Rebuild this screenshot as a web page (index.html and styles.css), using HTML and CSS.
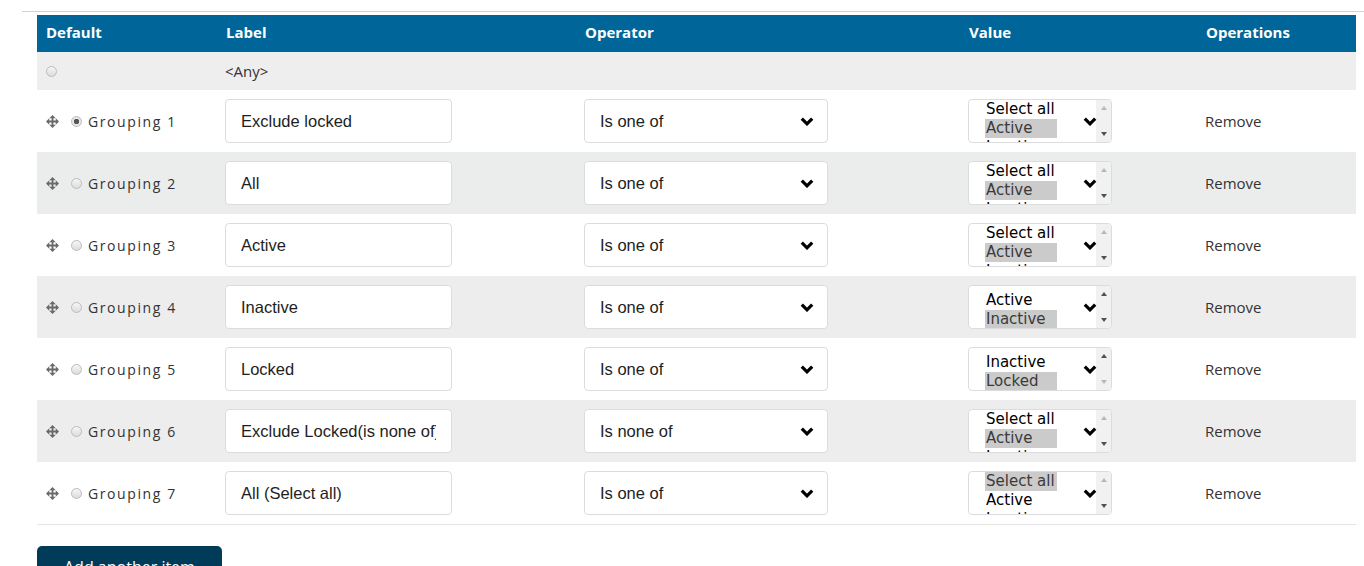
FILE: index.html
```html
<!DOCTYPE html>
<html lang="en">
<head>
<meta charset="utf-8">
<title>Groupings</title>
<link rel="stylesheet" href="styles.css">
</head>
<body>
<div class="page">
  <div class="field">
    <table class="groups">
      <colgroup>
        <col class="c-default"><col class="c-label"><col class="c-op"><col class="c-value"><col class="c-ops">
      </colgroup>
      <thead>
        <tr><th>Default</th><th>Label</th><th>Operator</th><th>Value</th><th>Operations</th></tr>
      </thead>
      <tbody>
        <tr class="any-row">
          <td><span class="radio"></span></td>
          <td class="any">&lt;Any&gt;</td>
          <td></td><td></td><td></td>
        </tr>

        <tr class="row">
          <td><div class="def"><svg class="handle" viewBox="0 0 14 14"><path d="M7 0L10.5 3.5H8V6H10.5V3.5L14 7L10.5 10.5V8H8V10.5H10.5L7 14L3.5 10.5H6V8H3.5V10.5L0 7L3.5 3.5V6H6V3.5H3.5Z"/></svg><span class="radio checked"></span><span class="grp">Grouping 1</span></div></td>
          <td><input class="text" type="text" value="Exclude locked"></td>
          <td><div class="sel"><select><option>Is one of</option></select><svg class="chev" viewBox="0 0 14 9"><polyline points="1.8,1.6 7,6.8 12.2,1.6"/></svg></div></td>
          <td><div class="lb"><div class="opts"><div class="o">Select all</div><div class="o on">Active</div><div class="o">Inactive</div></div><div class="lb-mid"><svg class="chev2" viewBox="0 0 14 9"><polyline points="1.8,1.6 7,6.8 12.2,1.6"/></svg></div><div class="sb"><span class="up off"></span><span class="dn"></span></div></div></td>
          <td class="rm">Remove</td>
        </tr>

        <tr class="row alt tint">
          <td><div class="def"><svg class="handle" viewBox="0 0 14 14"><path d="M7 0L10.5 3.5H8V6H10.5V3.5L14 7L10.5 10.5V8H8V10.5H10.5L7 14L3.5 10.5H6V8H3.5V10.5L0 7L3.5 3.5V6H6V3.5H3.5Z"/></svg><span class="radio"></span><span class="grp">Grouping 2</span></div></td>
          <td><input class="text" type="text" value="All"></td>
          <td><div class="sel"><select><option>Is one of</option></select><svg class="chev" viewBox="0 0 14 9"><polyline points="1.8,1.6 7,6.8 12.2,1.6"/></svg></div></td>
          <td><div class="lb"><div class="opts"><div class="o">Select all</div><div class="o on">Active</div><div class="o">Inactive</div></div><div class="lb-mid"><svg class="chev2" viewBox="0 0 14 9"><polyline points="1.8,1.6 7,6.8 12.2,1.6"/></svg></div><div class="sb"><span class="up off"></span><span class="dn"></span></div></div></td>
          <td class="rm">Remove</td>
        </tr>

        <tr class="row">
          <td><div class="def"><svg class="handle" viewBox="0 0 14 14"><path d="M7 0L10.5 3.5H8V6H10.5V3.5L14 7L10.5 10.5V8H8V10.5H10.5L7 14L3.5 10.5H6V8H3.5V10.5L0 7L3.5 3.5V6H6V3.5H3.5Z"/></svg><span class="radio"></span><span class="grp">Grouping 3</span></div></td>
          <td><input class="text" type="text" value="Active"></td>
          <td><div class="sel"><select><option>Is one of</option></select><svg class="chev" viewBox="0 0 14 9"><polyline points="1.8,1.6 7,6.8 12.2,1.6"/></svg></div></td>
          <td><div class="lb"><div class="opts"><div class="o">Select all</div><div class="o on">Active</div><div class="o">Inactive</div></div><div class="lb-mid"><svg class="chev2" viewBox="0 0 14 9"><polyline points="1.8,1.6 7,6.8 12.2,1.6"/></svg></div><div class="sb"><span class="up off"></span><span class="dn"></span></div></div></td>
          <td class="rm">Remove</td>
        </tr>

        <tr class="row alt">
          <td><div class="def"><svg class="handle" viewBox="0 0 14 14"><path d="M7 0L10.5 3.5H8V6H10.5V3.5L14 7L10.5 10.5V8H8V10.5H10.5L7 14L3.5 10.5H6V8H3.5V10.5L0 7L3.5 3.5V6H6V3.5H3.5Z"/></svg><span class="radio"></span><span class="grp">Grouping 4</span></div></td>
          <td><input class="text" type="text" value="Inactive"></td>
          <td><div class="sel"><select><option>Is one of</option></select><svg class="chev" viewBox="0 0 14 9"><polyline points="1.8,1.6 7,6.8 12.2,1.6"/></svg></div></td>
          <td><div class="lb"><div class="opts scrolled"><div class="o">Active</div><div class="o on">Inactive</div></div><div class="lb-mid"><svg class="chev2" viewBox="0 0 14 9"><polyline points="1.8,1.6 7,6.8 12.2,1.6"/></svg></div><div class="sb"><span class="up"></span><span class="dn"></span></div></div></td>
          <td class="rm">Remove</td>
        </tr>

        <tr class="row">
          <td><div class="def"><svg class="handle" viewBox="0 0 14 14"><path d="M7 0L10.5 3.5H8V6H10.5V3.5L14 7L10.5 10.5V8H8V10.5H10.5L7 14L3.5 10.5H6V8H3.5V10.5L0 7L3.5 3.5V6H6V3.5H3.5Z"/></svg><span class="radio"></span><span class="grp">Grouping 5</span></div></td>
          <td><input class="text" type="text" value="Locked"></td>
          <td><div class="sel"><select><option>Is one of</option></select><svg class="chev" viewBox="0 0 14 9"><polyline points="1.8,1.6 7,6.8 12.2,1.6"/></svg></div></td>
          <td><div class="lb"><div class="opts scrolled"><div class="o">Inactive</div><div class="o on">Locked</div></div><div class="lb-mid"><svg class="chev2" viewBox="0 0 14 9"><polyline points="1.8,1.6 7,6.8 12.2,1.6"/></svg></div><div class="sb"><span class="up"></span><span class="dn off"></span></div></div></td>
          <td class="rm">Remove</td>
        </tr>

        <tr class="row alt">
          <td><div class="def"><svg class="handle" viewBox="0 0 14 14"><path d="M7 0L10.5 3.5H8V6H10.5V3.5L14 7L10.5 10.5V8H8V10.5H10.5L7 14L3.5 10.5H6V8H3.5V10.5L0 7L3.5 3.5V6H6V3.5H3.5Z"/></svg><span class="radio"></span><span class="grp">Grouping 6</span></div></td>
          <td><input class="text" type="text" value="Exclude Locked(is none of)"></td>
          <td><div class="sel"><select><option>Is none of</option></select><svg class="chev" viewBox="0 0 14 9"><polyline points="1.8,1.6 7,6.8 12.2,1.6"/></svg></div></td>
          <td><div class="lb"><div class="opts"><div class="o">Select all</div><div class="o on">Active</div><div class="o">Inactive</div></div><div class="lb-mid"><svg class="chev2" viewBox="0 0 14 9"><polyline points="1.8,1.6 7,6.8 12.2,1.6"/></svg></div><div class="sb"><span class="up off"></span><span class="dn"></span></div></div></td>
          <td class="rm">Remove</td>
        </tr>

        <tr class="row last">
          <td><div class="def"><svg class="handle" viewBox="0 0 14 14"><path d="M7 0L10.5 3.5H8V6H10.5V3.5L14 7L10.5 10.5V8H8V10.5H10.5L7 14L3.5 10.5H6V8H3.5V10.5L0 7L3.5 3.5V6H6V3.5H3.5Z"/></svg><span class="radio"></span><span class="grp">Grouping 7</span></div></td>
          <td><input class="text" type="text" value="All (Select all)"></td>
          <td><div class="sel"><select><option>Is one of</option></select><svg class="chev" viewBox="0 0 14 9"><polyline points="1.8,1.6 7,6.8 12.2,1.6"/></svg></div></td>
          <td><div class="lb"><div class="opts"><div class="o on">Select all</div><div class="o">Active</div><div class="o">Inactive</div></div><div class="lb-mid"><svg class="chev2" viewBox="0 0 14 9"><polyline points="1.8,1.6 7,6.8 12.2,1.6"/></svg></div><div class="sb"><span class="up off"></span><span class="dn"></span></div></div></td>
          <td class="rm">Remove</td>
        </tr>
      </tbody>
    </table>
    <button class="add-btn" type="button">Add another item</button>
  </div>
</div>
</body>
</html>
```

FILE: styles.css
```css
html, body {
  margin: 0;
  padding: 0;
  background: #fff;
}
body {
  font-family: "Open Sans", "Liberation Sans", sans-serif;
  color: #333;
  overflow: hidden;
}
.page {
  padding: 11px 0 0 22px;
}
.field {
  border-top: 1px solid #d2d2d2;
  padding: 3px 8px 0 15px;
}
.groups {
  width: 100%;
  border-collapse: collapse;
  table-layout: fixed;
}
.c-default { width: 180px; }
.c-label { width: 359px; }
.c-op { width: 384px; }
.c-value { width: 237px; }
.c-ops { width: 159px; }

.groups th {
  background: #006699;
  color: #fff;
  font-weight: 700;
  font-size: 15px;
  text-align: left;
  height: 37px;
  box-sizing: border-box;
  padding: 0 9px 3px;
  vertical-align: middle;
}
.groups td {
  padding: 0 8px;
  vertical-align: middle;
}
.any-row td {
  background: #eeeeee;
  height: 38px;
  font-size: 15px;
  color: #333;
}
.any-row td:first-child { padding-left: 9px; }
.any-row .radio { display: block; }
.row td { height: 62px; }
.row.alt td { background: #ededed; }
.row.tint td { background: #ebeded; }
.row.last td { border-bottom: 1px solid #e4e4e4; }

.def {
  display: flex;
  align-items: center;
  padding-left: 1px;
}
.handle {
  width: 13px;
  height: 13px;
  fill: #6a6a6a;
  flex: none;
}
.radio {
  width: 11px;
  height: 11px;
  box-sizing: border-box;
  border-radius: 50%;
  border: 1px solid #bdbdbd;
  background: linear-gradient(#f6f6f6, #dcdcdc);
  flex: none;
}
.def .radio { margin-left: 12px; }
.radio.checked {
  background: radial-gradient(circle, #555 0, #555 2.4px, #e9e9e9 3px, #e2e2e2 100%);
}
.grp {
  margin-left: 6px;
  font-size: 14px;
  letter-spacing: 1.6px;
  color: #333;
  white-space: nowrap;
}

.text {
  display: block;
  box-sizing: border-box;
  width: 227px;
  height: 44px;
  margin: 0;
  padding: 0 15px;
  border: 1px solid #dcdcdc;
  border-radius: 4px;
  background: #fff;
  font-family: "Liberation Sans", Arial, sans-serif;
  font-size: 16.5px;
  color: #1e1e1e;
  outline: none;
}

.sel {
  position: relative;
  width: 244px;
  height: 44px;
}
.sel select {
  appearance: none;
  -webkit-appearance: none;
  display: block;
  box-sizing: border-box;
  width: 100%;
  height: 44px;
  margin: 0;
  padding: 0 40px 0 15px;
  border: 1px solid #dcdcdc;
  border-radius: 4px;
  background: #fff;
  font-family: "Liberation Sans", Arial, sans-serif;
  font-size: 16.5px;
  color: #1e1e1e;
  outline: none;
}
.chev {
  position: absolute;
  right: 14px;
  top: 18px;
  width: 14px;
  height: 9px;
  pointer-events: none;
}
.chev polyline, .chev2 polyline {
  fill: none;
  stroke: #000;
  stroke-width: 3.2;
}

.lb {
  display: flex;
  box-sizing: border-box;
  width: 144px;
  height: 44px;
  border: 1px solid #dcdcdc;
  border-radius: 4px;
  background: #fff;
  overflow: hidden;
}
.opts {
  width: 72px;
  margin-left: 16px;
  flex: none;
  overflow: hidden;
  font-family: "DejaVu Sans", Verdana, sans-serif;
  font-size: 15px;
  line-height: 19px;
  color: #000;
  margin-top: 0;
}
.opts.scrolled { margin-top: 5px; }
.o {
  white-space: nowrap;
  padding-left: 1px;
}
.o.on {
  background: #cbcbcb;
  color: #3a3a3a;
}
.lb-mid {
  flex: 1;
  display: flex;
  align-items: center;
  justify-content: flex-end;
}
.chev2 {
  width: 14px;
  height: 9px;
  margin-right: -1px;
  position: relative;
  z-index: 1;
}
.sb {
  width: 15px;
  flex: none;
  background: #f1f1f1;
  display: flex;
  flex-direction: column;
  justify-content: space-between;
  align-items: center;
  padding: 6px 0 6px;
}
.up, .dn {
  width: 0;
  height: 0;
  border-left: 3.5px solid transparent;
  border-right: 3.5px solid transparent;
}
.up { border-bottom: 4px solid #505050; }
.dn { border-top: 4px solid #505050; }
.up.off { border-bottom-color: #b8b8b8; }
.dn.off { border-top-color: #b8b8b8; }

.rm {
  font-size: 15px;
  color: #333;
}

.add-btn {
  display: block;
  margin: 21px 0 0 0;
  padding: 11px 27px 14px;
  border: 0;
  border-radius: 5px;
  background: #003c5a;
  color: #fff;
  font-family: "Open Sans", sans-serif;
  font-size: 16px;
  line-height: 20px;
}
```
